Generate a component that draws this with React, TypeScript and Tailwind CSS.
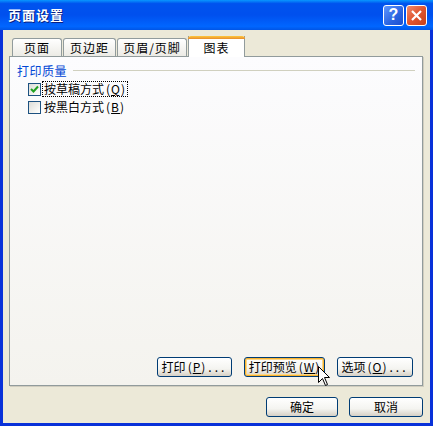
const font = { fontFamily: '"SimSun", "Noto Sans CJK SC", sans-serif' };

const XpButton = ({
  children,
  width,
  focused = false,
}: {
  children: React.ReactNode;
  width: string;
  focused?: boolean;
}) => (
  <div
    className={`${width} h-[20px] rounded-[3px] border border-[#003c74] bg-[linear-gradient(180deg,#ffffff_0%,#f4f4f0_60%,#d6d0c5_100%)] flex items-center justify-center text-[12px] text-black leading-none ${
      focused ? "shadow-[inset_0_0_0_1px_#f8b330,inset_0_0_0_2px_#fdd889]" : ""
    }`}
  >
    {children}
  </div>
);

// mnemonic like (Q), spaced like the bitmap font in the screenshot
const Key = ({ k }: { k: string }) => (
  <span className="tracking-[1px] pl-[2px]">
    (<u>{k}</u>)
  </span>
);

const Dots = () => <span className="tracking-[3px] pl-[2px]">...</span>;

const Checkbox = ({ checked }: { checked?: boolean }) => (
  <div className="w-[13px] h-[13px] border border-[#1c5180] bg-[linear-gradient(135deg,#dcdcd7_0%,#f5f5f2_70%,#ffffff_100%)] flex items-center justify-center">
    {checked && (
      <svg width="9" height="9" viewBox="0 0 9 9">
        <path d="M1 4 L3.5 6.5 L8 1.5" stroke="#21a121" strokeWidth="2" fill="none" />
      </svg>
    )}
  </div>
);

const Tab = ({ label, width, selected }: { label: string; width: string; selected?: boolean }) =>
  selected ? (
    <div className={`${width} h-[21px] -mb-px relative z-10 bg-white border-x border-[#919b9c] flex flex-col`}>
      <div className="h-[3px] -mx-px rounded-t-[3px] bg-[linear-gradient(180deg,#ffc83c,#e68b2c)]" />
      <div className="flex-1 flex items-center justify-center text-[12px] leading-none tracking-[1px]">{label}</div>
    </div>
  ) : (
    <div
      className={`${width} h-[18px] rounded-t-[3px] border border-b-0 border-[#919b9c] bg-[linear-gradient(180deg,#ffffff,#ecebe5)] flex items-center justify-center text-[12px] leading-none tracking-[1px]`}
    >
      {label}
    </div>
  );

export default function App() {
  return (
    <div className="relative w-[433px] h-[426px] bg-[#0831d9] flex flex-col overflow-hidden" style={font}>
      {/* Title bar */}
      <div className="h-[30px] flex items-center justify-between pl-[8px] pr-[6px] bg-[linear-gradient(180deg,#0997ff_0%,#0053ee_12%,#0050ee_50%,#0066ff_88%,#0055e6_100%)]">
        <span className="text-white font-bold text-[13px] tracking-[1px] [text-shadow:1px_1px_0_#0a1f80]">
          页面设置
        </span>
        <div className="flex gap-[2px]">
          <div
            className="w-[21px] h-[21px] rounded-[3px] border border-white bg-[linear-gradient(135deg,#5f96ff,#2a63e0_60%,#1b4fd0)] flex items-center justify-center text-white font-bold text-[16px] leading-none"
            style={{ fontFamily: '"Liberation Sans", sans-serif' }}
          >
            ?
          </div>
          <div className="w-[21px] h-[21px] rounded-[3px] border border-white bg-[linear-gradient(135deg,#f08a6c,#e0552f_50%,#c6401c)] flex items-center justify-center">
            <svg width="13" height="13" viewBox="0 0 13 13">
              <path d="M2 2 L11 11 M11 2 L2 11" stroke="white" strokeWidth="2.2" />
            </svg>
          </div>
        </div>
      </div>

      {/* Body */}
      <div className="flex-1 mx-[3px] mb-[3px] bg-[#ece9d8] pl-[6px] pr-[7px] pt-[5px] flex flex-col">
        {/* Tabs */}
        <div className="flex items-end h-[21px] pl-[3px] gap-px">
          <Tab label="页面" width="w-[50px]" />
          <Tab label="页边距" width="w-[53px]" />
          <Tab label="页眉/页脚" width="w-[70px]" />
          <Tab label="图表" width="w-[57px]" selected />
        </div>

        {/* Panel */}
        <div className="h-[330px] border border-[#919b9c] shadow-[1px_1px_0_#d0cdbf] bg-[linear-gradient(180deg,#fcfcfe,#f4f3ee)] flex flex-col px-[7px] pt-[7px] pb-[8px]">
          <div className="flex items-center gap-[6px]">
            <span className="text-[12px] leading-[13px] text-[#0046d5] tracking-[0.5px]">打印质量</span>
            <div className="flex-1 h-px bg-[#d0d0bf]" />
          </div>
          <div className="flex flex-col gap-[2px] pl-[11px] mt-[4px]">
            <div className="flex items-center gap-px">
              <Checkbox checked />
              <span className="text-[12px] leading-[14px] px-px border border-dotted border-black">
                按草稿方式<Key k="Q" />
              </span>
            </div>
            <div className="flex items-center gap-px">
              <Checkbox />
              <span className="text-[12px] leading-[14px] px-px border border-transparent">
                按黑白方式<Key k="B" />
              </span>
            </div>
          </div>
          <div className="flex-1" />
          <div className="flex justify-end gap-[12px] pr-[2px]">
            <XpButton width="w-[75px]">
              打印<Key k="P" />
              <Dots />
            </XpButton>
            <XpButton width="w-[81px]" focused>
              打印预览<Key k="W" />
            </XpButton>
            <XpButton width="w-[76px]">
              选项<Key k="O" />
              <Dots />
            </XpButton>
          </div>
        </div>

        <div className="flex justify-end gap-[11px] mt-[11px]">
          <XpButton width="w-[72px]">确定</XpButton>
          <XpButton width="w-[74px]">取消</XpButton>
        </div>
      </div>

      {/* Mouse cursor */}
      <svg className="absolute left-[318px] top-[366px]" width="13" height="21" viewBox="0 0 13 21">
        <path
          d="M0.5 0.5 L0.5 16.5 L4.5 12.5 L7.5 19.5 L9.5 18.5 L6.5 11.5 L11.5 11.5 Z"
          fill="white"
          stroke="black"
          strokeWidth="1"
        />
      </svg>
    </div>
  );
}
